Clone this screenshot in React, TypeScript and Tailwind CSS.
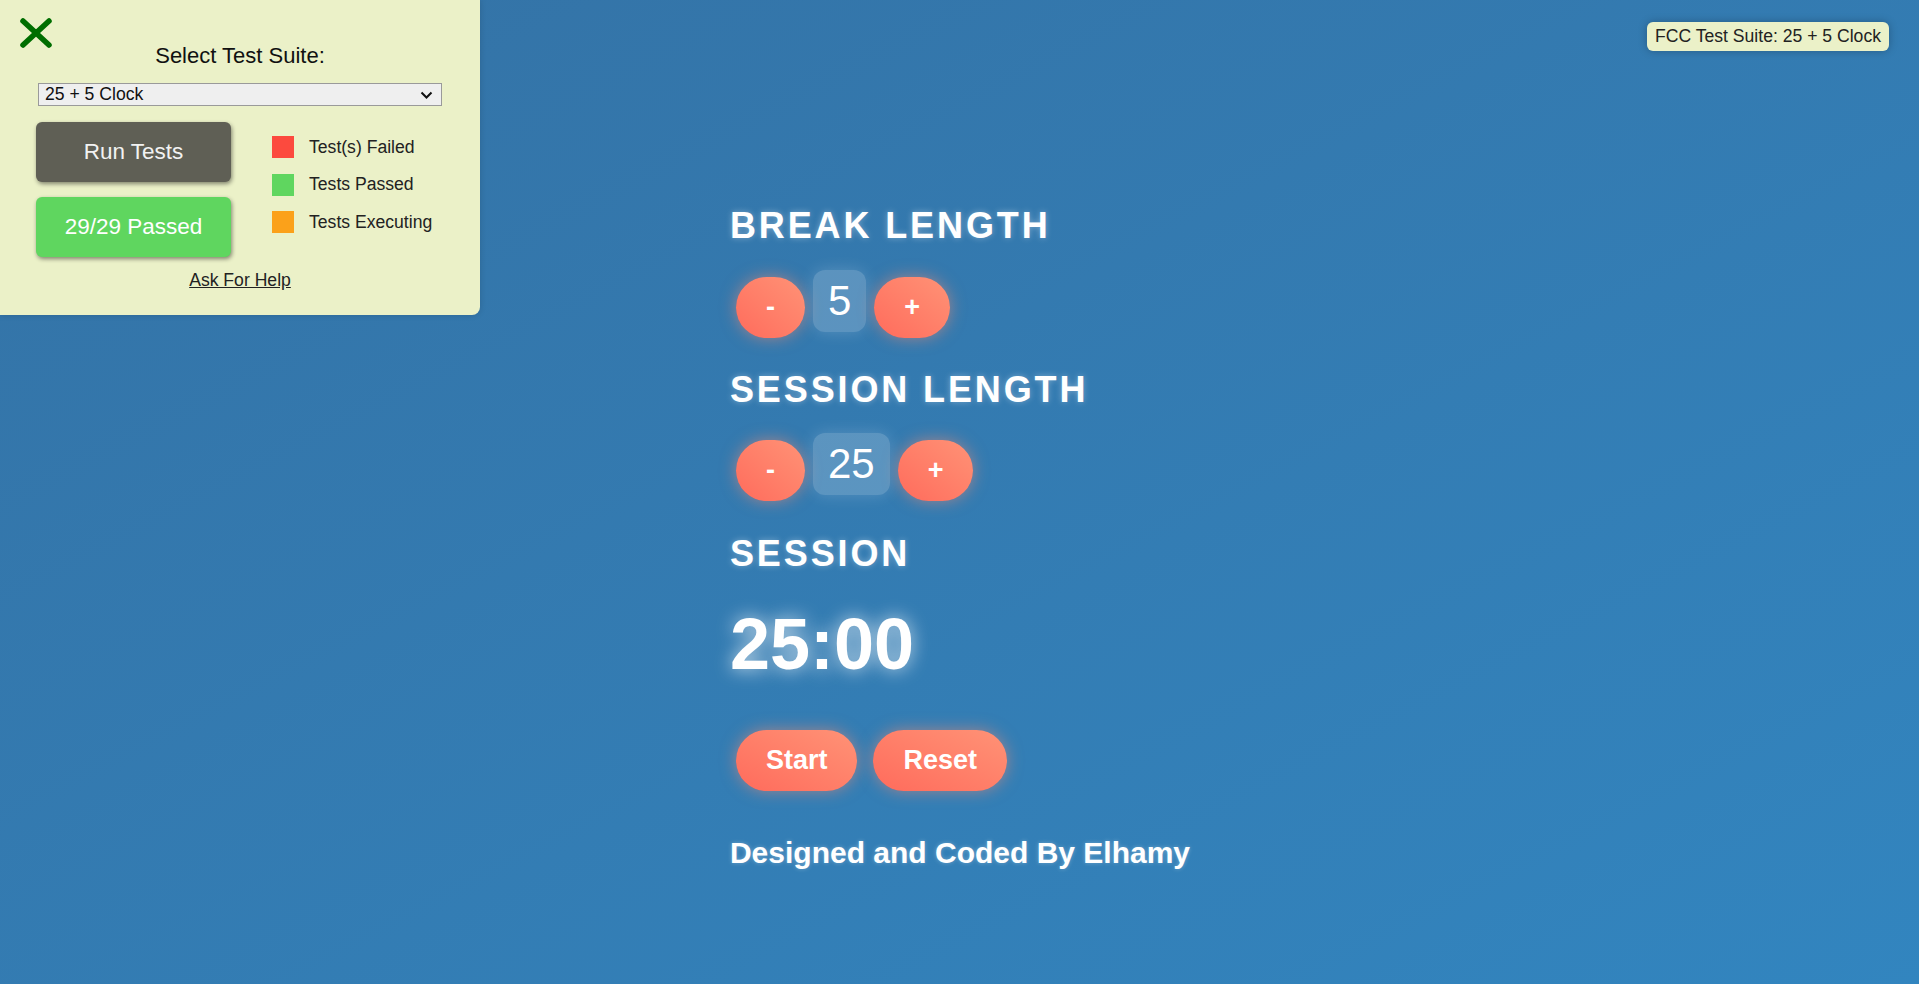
const coral =
  "bg-linear-to-tr from-[#ff6b5c] to-[#ff9276] text-white font-bold text-[27px] px-[30px] py-[15px] leading-[31px] rounded-full shadow-[0_0_16px_rgba(255,140,110,0.55)]";

const numBox =
  "bg-[rgba(255,255,255,0.2)] text-white text-[42px] leading-[48px] px-[15px] py-[7px] rounded-[12px] shadow-[0_0_16px_rgba(255,255,255,0.18)]";

const heading =
  "text-white font-bold text-[36px] leading-none tracking-[0.08em] pt-[2px] [text-shadow:0_0_6px_rgba(255,255,255,0.35)]";

const TestPanel = () => {
  return (
    <div className="absolute left-0 top-0 w-[480px] h-[315px] bg-[#ebf1c8] rounded-br-[8px] shadow-[0_0_6px_rgba(0,0,0,0.15)] font-['Liberation_Sans',Arial,sans-serif] text-[#111]">
      <svg
        className="absolute left-[18px] top-[16px]"
        width="36"
        height="36"
        viewBox="0 0 36 36"
      >
        <path
          d="M5 5 L31 29 M31 5 L5 29"
          stroke="#006e00"
          strokeWidth="5.5"
          strokeLinecap="round"
        />
      </svg>

      <div className="pt-[43px] text-center text-[22px] leading-[25px]">Select Test Suite:</div>

      <div className="mt-[15px] ml-[38px] w-[404px] h-[23px] bg-[#efefef] border border-[#9a9a9a] flex items-center justify-between pl-[6px] pr-[8px] text-[17.6px] leading-none text-[#111]">
        <span>25 + 5 Clock</span>
        <svg width="13" height="8" viewBox="0 0 13 8">
          <polyline points="1.5,1.5 6.5,6.5 11.5,1.5" fill="none" stroke="#111" strokeWidth="2" />
        </svg>
      </div>

      <div className="mt-[16px] flex">
        <div className="ml-[36px] flex flex-col gap-[15px]">
          <div className="w-[195px] h-[60px] rounded-[6px] bg-[#5f5f55] text-[#f2f2f2] text-[22.5px] flex items-center justify-center shadow-[1px_2px_4px_rgba(0,0,0,0.45)]">
            Run Tests
          </div>
          <div className="w-[195px] h-[60px] rounded-[6px] bg-[#5fd65f] text-white text-[22.5px] flex items-center justify-center shadow-[1px_2px_4px_rgba(0,0,0,0.45)]">
            29/29 Passed
          </div>
        </div>

        <div className="ml-[41px] mt-[14px] flex flex-col gap-[15.5px] text-[17.6px] text-[#222]">
          <div className="flex items-center h-[22px]">
            <span className="w-[22px] h-[22px] bg-[#fc4a3e]" />
            <span className="ml-[15px]">Test(s) Failed</span>
          </div>
          <div className="flex items-center h-[22px]">
            <span className="w-[22px] h-[22px] bg-[#5fd65f]" />
            <span className="ml-[15px]">Tests Passed</span>
          </div>
          <div className="flex items-center h-[22px]">
            <span className="w-[22px] h-[22px] bg-[#fba11a]" />
            <span className="ml-[15px]">Tests Executing</span>
          </div>
        </div>
      </div>

      <div className="mt-[13px] text-center text-[17.6px] leading-[20px] text-[#222]">
        <a className="underline">Ask For Help</a>
      </div>
    </div>
  );
};

const App = () => {
  return (
    <div className="relative min-h-screen w-full bg-linear-to-br from-[#3472a5] to-[#3285bf] font-['Liberation_Sans',Arial,sans-serif]">
      <TestPanel />

      <div className="absolute right-[30px] top-[22px] h-[29px] px-[8px] flex items-center rounded-[6px] bg-[#ebf1c8] text-[17.6px] text-[#222] shadow-[0_0_8px_rgba(0,0,0,0.25)]">
        FCC Test Suite: 25 + 5 Clock
      </div>

      <div className="flex justify-center pt-[206px] pb-[40px] pl-[1px]">
        <div className="flex flex-col items-start">
          <h2 className={heading}>BREAK LENGTH</h2>
          <div className="mt-[26px] ml-[6px] flex items-start gap-[8px]">
            <button className={coral + " mt-[7px]"}>-</button>
            <div className={numBox}>5</div>
            <button className={coral + " mt-[7px]"}>+</button>
          </div>

          <h2 className={heading + " mt-[32px]"}>SESSION LENGTH</h2>
          <div className="mt-[25px] ml-[6px] flex items-start gap-[8px]">
            <button className={coral + " mt-[7px]"}>-</button>
            <div className={numBox}>25</div>
            <button className={coral + " mt-[7px]"}>+</button>
          </div>

          <h2 className={heading + " mt-[33px]"}>SESSION</h2>
          <div className="mt-[36px] text-white font-bold text-[72px] leading-none [text-shadow:0_0_18px_rgba(255,255,255,0.75)]">
            25:00
          </div>

          <div className="mt-[50px] ml-[6px] flex gap-[16px]">
            <button className={coral}>Start</button>
            <button className={coral}>Reset</button>
          </div>

          <p className="mt-[47px] text-white font-bold text-[30px] leading-none [text-shadow:0_0_4px_rgba(255,255,255,0.3)]">
            Designed and Coded By Elhamy
          </p>
        </div>
      </div>
    </div>
  );
};

export default App;
